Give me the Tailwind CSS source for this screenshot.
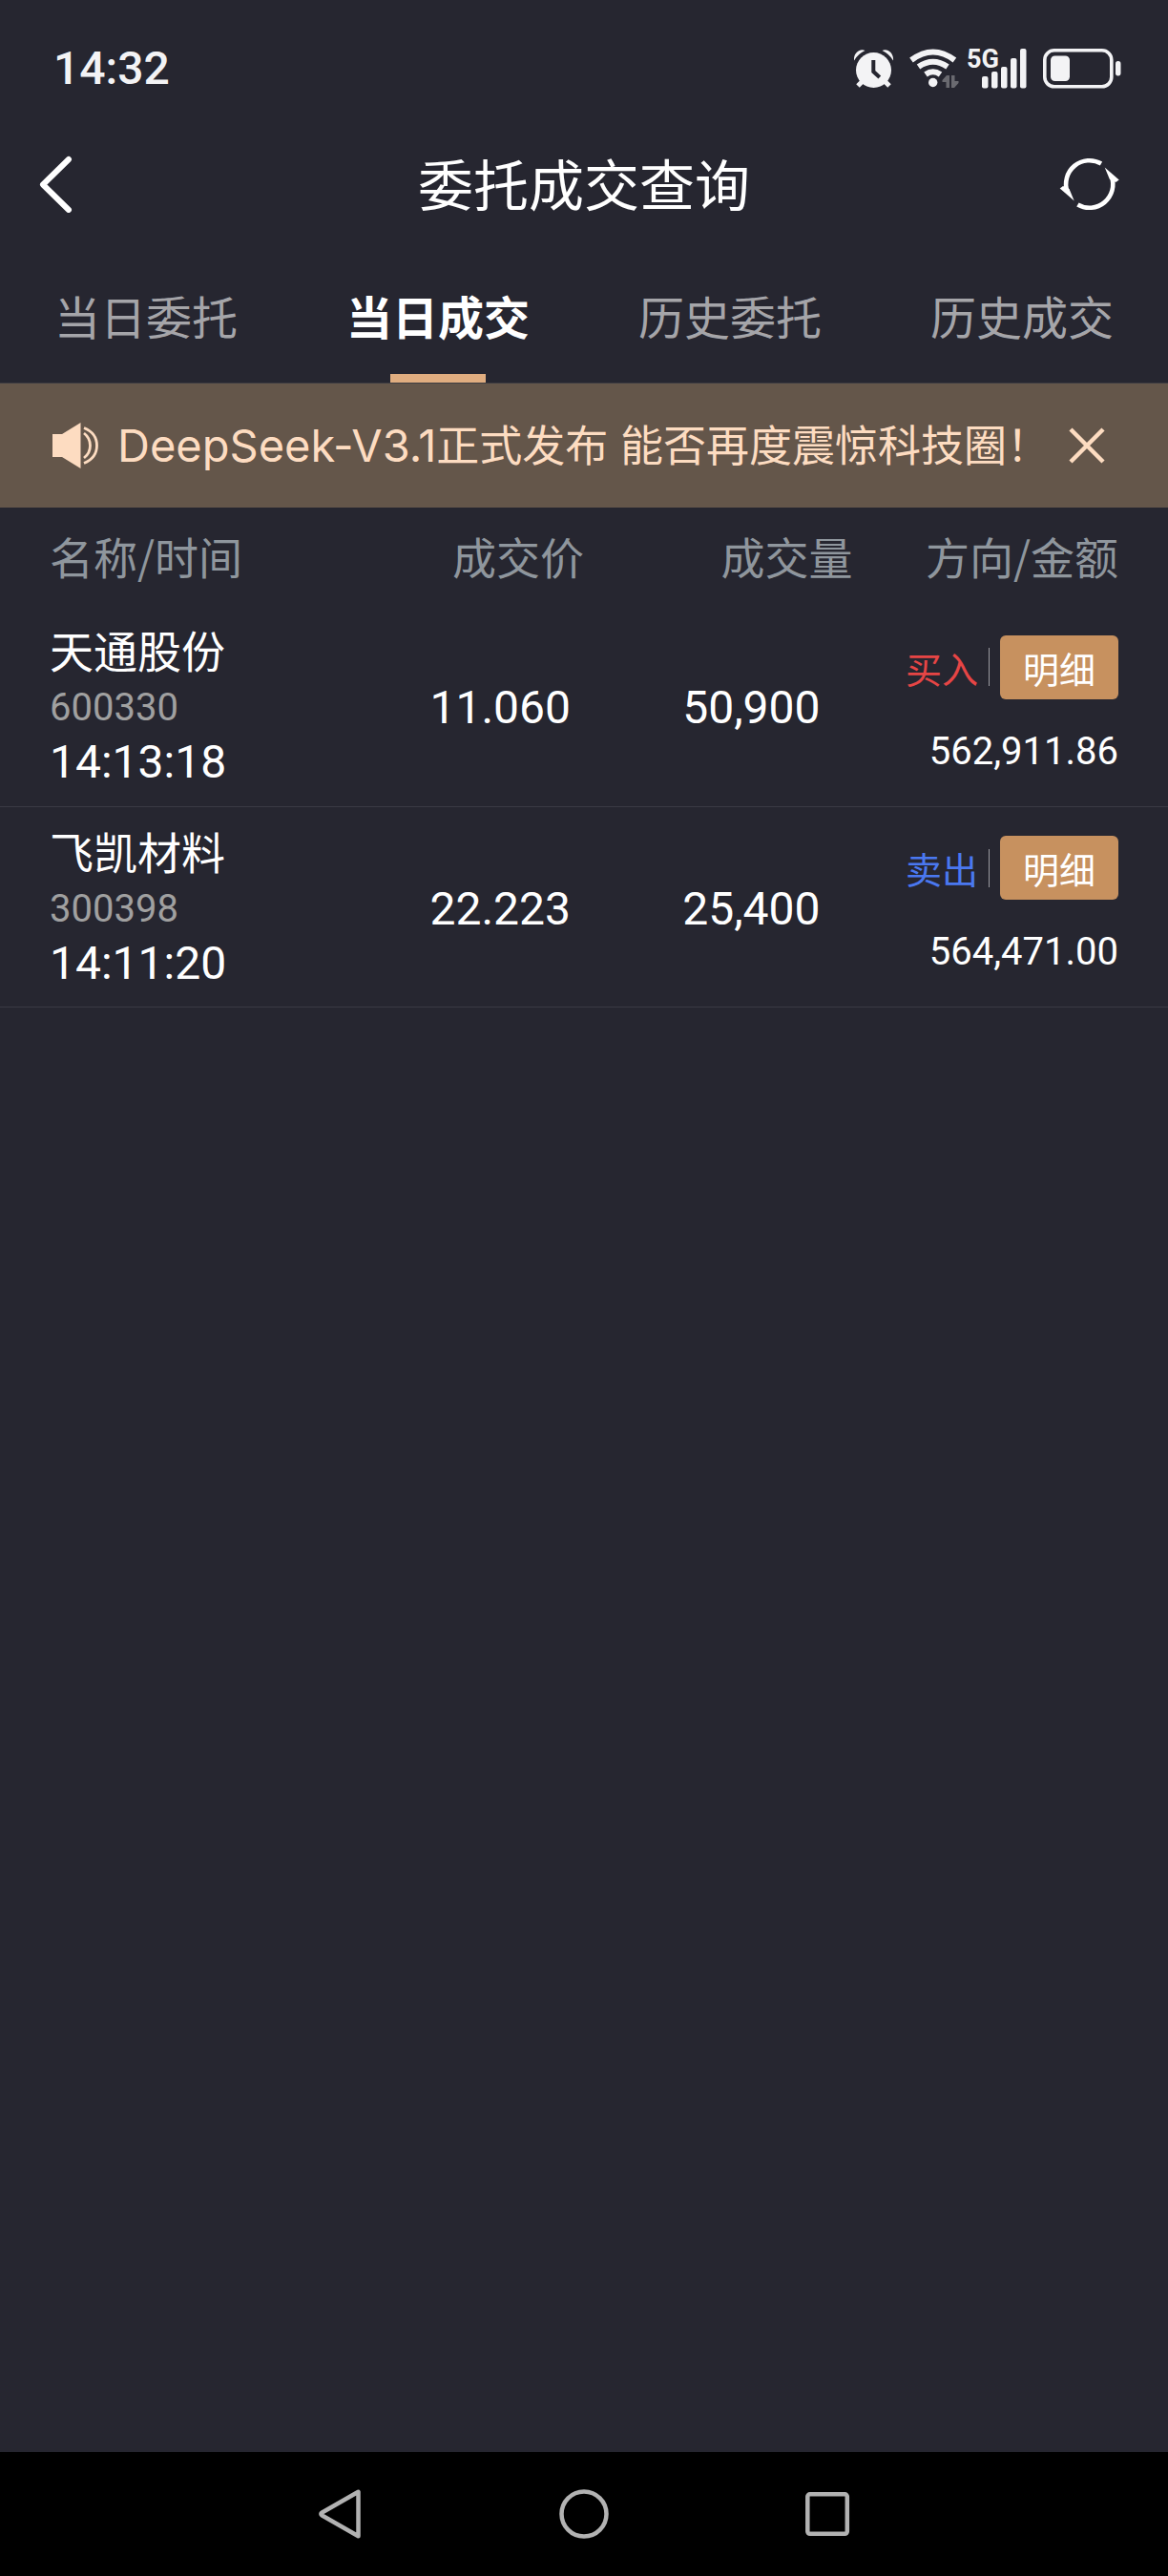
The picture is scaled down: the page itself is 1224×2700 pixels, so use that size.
<!DOCTYPE html>
<html lang="zh-CN">
<head>
    <meta charset="UTF-8">
    <meta name="viewport" content="width=device-width, initial-scale=1.0">
    <title>委托成交查询</title>
    <script src="https://cdn.jsdelivr.net/npm/@tailwindcss/browser@4"></script>
</head>
<body class="bg-[#262630] text-white font-['Noto_Sans_CJK_SC',sans-serif]">
    <div class="flex min-h-screen flex-col">
        <!-- Status bar -->
        <div class="flex h-36 items-center justify-between pl-14 pr-12 text-[#f3f3f5]">
            <span class="font-[Roboto,sans-serif] text-[48px] leading-[56px] font-medium">14:32</span>
            <div class="flex items-center gap-4">
                <svg class="h-[42px] w-[42px]" viewBox="0 0 42 42" fill="currentColor" aria-label="闹钟">
                    <path d="M0 12.500C-1 5 6-1 11.500 2Q4 5.500 0 12.500Z"/>
                    <path d="M41 12.500C42 5 35-1 29.500 2Q37 5.500 41 12.500Z"/>
                    <path d="M9 34l-5 5M32 34l5 5" stroke="currentColor" stroke-width="5"/>
                    <circle cx="20.500" cy="22.500" r="18.500"/>
                    <path d="M20.300 12v12l6.500 6" fill="none" stroke="#262630" stroke-width="4"/>
                </svg>
                <svg class="h-[42px] w-[52px]" viewBox="0 0 52 42" fill="none" stroke="currentColor" stroke-width="6" aria-label="无线网络">
                    <path d="M2 12Q24.700-5 47.400 12"/>
                    <path d="M9.500 19Q24.700 8.500 40 19"/>
                    <path d="M17 27Q24.700 21.500 32.500 27"/>
                    <circle cx="24.700" cy="35.500" r="4.700" fill="currentColor" stroke="none"/>
                    <path d="M42 28h-3l-4.500 5v2h4v6H42zM44 41h3l4.500-5v-2h-4v-6H44z" fill="#6a6a70" stroke="none"/>
                </svg>
                <div class="-ml-2 flex items-center gap-4">
                    <svg class="h-[42px] w-[64px] overflow-visible" viewBox="0 0 64 42" fill="currentColor" aria-label="5G">
                        <text x="0" y="20" font-size="27" font-weight="700" font-family="Liberation Sans Narrow, Roboto, sans-serif">5G</text>
                        <rect x="16" y="29" width="6.500" height="12.500" rx="2"/>
                        <rect x="26" y="24" width="6.500" height="17.500" rx="2"/>
                        <rect x="36" y="19" width="6.500" height="22.500" rx="2"/>
                        <rect x="46" y="10" width="6.500" height="31.500" rx="2"/>
                        <rect x="56" y="0" width="6.500" height="41.500" rx="2"/>
                    </svg>
                    <svg class="h-[42px] w-[83px]" viewBox="0 0 83 42" fill="currentColor" aria-label="电量">
                        <rect x="1.800" y="1.800" width="70" height="38" rx="10" fill="none" stroke="currentColor" stroke-width="3.600"/>
                        <rect x="8" y="7.500" width="20" height="26.500" rx="4.500"/>
                        <rect x="76" y="13" width="5.500" height="15.500" rx="2.700"/>
                    </svg>
                </div>
            </div>
        </div>

        <!-- Title bar -->
        <header class="flex h-[98px] items-center pl-10 pr-[50px]">
            <button type="button" aria-label="返回" class="w-[74px]">
                <svg class="h-[60px] w-[38px]" viewBox="0 0 38 60" fill="none" stroke="#fff" stroke-width="6" stroke-linecap="round" stroke-linejoin="round">
                    <path d="M32 4L5 30.500L32 57"/>
                </svg>
            </button>
            <h1 class="flex-1 pb-1 text-center text-[58px] leading-[72px]">委托成交查询</h1>
            <button type="button" aria-label="刷新" class="w-16">
                <svg class="h-[56px] w-[64px]" viewBox="0 0 64 56" fill="none" stroke="#fff" stroke-width="4.600">
                    <path d="M44 6.500A24.600 24.600 0 0 0 8.500 36"/>
                    <path d="M19.400 49.500A24.600 24.600 0 0 0 54.900 20"/>
                    <path d="M.700 32.500L4 30L10.500 33L15.700 45.500Z" fill="#fff" stroke="none"/>
                    <path d="M62.700 23.500L59.400 26L52.900 23L47.700 10.500Z" fill="#fff" stroke="none"/>
                </svg>
            </button>
        </header>

        <!-- Tabs -->
        <nav class="grid h-40 grid-cols-4 border-b border-[#3f3d42] text-[48px] leading-[72px] text-[#a5a5a9]">
            <button type="button" class="flex flex-col items-center pt-[52px]">当日委托</button>
            <button type="button" class="flex flex-col items-center justify-between pt-[52px] font-bold text-white" aria-current="page">
                当日成交
                <span class="h-[9px] w-[100px] bg-[#e0ad80]"></span>
            </button>
            <button type="button" class="flex flex-col items-center pt-[52px]">历史委托</button>
            <button type="button" class="flex flex-col items-center pt-[52px]">历史成交</button>
        </nav>

        <!-- Notice -->
        <div class="flex h-[130px] items-center bg-[#64564a] pl-[55px] pr-[66px] text-[#fddcc1]">
            <svg class="h-[50px] w-[48px] shrink-0" viewBox="0 0 48 50" fill="none" stroke="currentColor" stroke-width="2.800">
                <path d="M0 13h10L29.500 1v48L10 37H0z" fill="currentColor" stroke="none"/>
                <path d="M33 12Q39.500 17 39.500 25T33 38"/>
                <path d="M33 6.500Q46.500 12 46.500 25T33 43.500"/>
            </svg>
            <a href="#" class="ml-5 flex-1 whitespace-nowrap font-[Inter,'Noto_Sans_CJK_SC',sans-serif] text-[45px] leading-[64px]"><span class="text-[47px]">DeepSeek-V3.1</span>正式发布 能否再度震惊科技圈！</a>
            <button type="button" aria-label="关闭">
                <svg class="h-[38px] w-[38px]" viewBox="0 0 38 38" fill="none" stroke="currentColor" stroke-width="4.500">
                    <path d="M2 2l34 34M36 2L2 36"/>
                </svg>
            </button>
        </div>

        <!-- Deals -->
        <table class="w-full table-fixed">
            <thead class="text-[46px] leading-[64px] text-[#8f969d]">
                <tr class="h-[103px]">
                    <th class="w-[30%] pb-1 pl-[52px] text-left font-normal whitespace-nowrap">名称/时间</th>
                    <th class="w-[20%] pb-1 text-right font-normal">成交价</th>
                    <th class="w-[23%] pb-1 text-right font-normal">成交量</th>
                    <th class="w-[27%] pb-1 pr-[52px] text-right font-normal whitespace-nowrap">方向/金额</th>
                </tr>
            </thead>
            <tbody class="font-[Roboto,'Noto_Sans_CJK_SC',sans-serif] text-[48px] leading-[57px]">
                <tr class="h-[210px] border-b border-[#3a3a44]">
                    <td class="pt-1 pl-[52px] whitespace-nowrap">
                        <div class="text-[46px]">天通股份</div>
                        <div class="text-[40px] text-[#a0a0a0]">600330</div>
                        <div>14:13:18</div>
                    </td>
                    <td class="pt-1 pr-[14px] text-right">11.060</td>
                    <td class="pt-1 pr-[34px] text-right">50,900</td>
                    <td class="pt-[2px] pr-[52px] text-[38px]">
                        <div class="flex items-center justify-end font-['Noto_Sans_CJK_SC',sans-serif]">
                            <span class="text-[#e64545]">买入</span>
                            <span class="mx-[11px] h-10 w-px bg-[#9a9aa0]"></span>
                            <button type="button" class="h-[67px] w-[124px] rounded-md bg-[#c7915f]">明细</button>
                        </div>
                        <div class="mt-[26px] text-right text-[40px]">562,911.86</div>
                    </td>
                </tr>
                <tr class="h-[210px] border-b border-[#3a3a44]">
                    <td class="pt-1 pl-[52px] whitespace-nowrap">
                        <div class="text-[46px]">飞凯材料</div>
                        <div class="text-[40px] text-[#a0a0a0]">300398</div>
                        <div>14:11:20</div>
                    </td>
                    <td class="pt-1 pr-[14px] text-right">22.223</td>
                    <td class="pt-1 pr-[34px] text-right">25,400</td>
                    <td class="pt-[2px] pr-[52px] text-[38px]">
                        <div class="flex items-center justify-end font-['Noto_Sans_CJK_SC',sans-serif]">
                            <span class="text-[#4a78f0]">卖出</span>
                            <span class="mx-[11px] h-10 w-px bg-[#9a9aa0]"></span>
                            <button type="button" class="h-[67px] w-[124px] rounded-md bg-[#c7915f]">明细</button>
                        </div>
                        <div class="mt-[26px] text-right text-[40px]">564,471.00</div>
                    </td>
                </tr>
            </tbody>
        </table>

        <!-- System navigation -->
        <div class="mt-auto flex h-[130px] items-center justify-center gap-[203px] bg-black">
            <button type="button" aria-label="系统返回">
                <svg class="h-[52px] w-[52px]" viewBox="0 0 52 52" fill="none" stroke="#b2b2b2" stroke-width="4.500" stroke-linejoin="round">
                    <path d="M44.500 2.800v46.400L6.500 27.500Q4.200 26 6.500 24.500Z"/>
                </svg>
            </button>
            <button type="button" aria-label="主屏幕">
                <svg class="h-[52px] w-[52px]" viewBox="0 0 52 52" fill="none" stroke="#b2b2b2" stroke-width="4.500">
                    <circle cx="26" cy="26" r="23.500"/>
                </svg>
            </button>
            <button type="button" aria-label="最近任务">
                <svg class="h-[52px] w-[52px]" viewBox="0 0 52 52" fill="none" stroke="#b2b2b2" stroke-width="4.500">
                    <rect x="5.300" y="5.300" width="41.500" height="41.500" rx="2.500"/>
                </svg>
            </button>
        </div>
    </div>
</body>
</html>
